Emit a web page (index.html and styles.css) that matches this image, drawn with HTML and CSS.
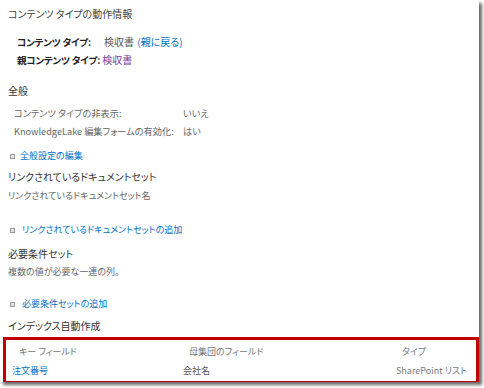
FILE: index.html
```html
<!DOCTYPE html>
<html lang="ja">
<head>
  <meta charset="UTF-8" />
  <title>コンテンツ タイプの動作情報</title>
  <link rel="stylesheet" href="styles.css">
</head>
<body>
<div class="frame">
  <h2 class="title">コンテンツ タイプの動作情報</h2>

  <div class="ct-info">
    <div class="ct-row"><b class="ct-label">コンテンツ タイプ:</b><span class="ct-val">検収書 <a href="#" class="link">(親に戻る)</a></span></div>
    <div class="ct-row"><b>親コンテンツ タイプ:</b> <a href="#" class="visited">検収書</a></div>
  </div>

  <h3 class="section first">全般</h3>
  <div class="props">
    <div class="prop"><span class="prop-label">コンテンツ タイプの非表示:</span><span>いいえ</span></div>
    <div class="prop"><span class="prop-label">KnowledgeLake 編集フォームの有効化:</span><span>はい</span></div>
  </div>
  <div class="action a1"><span class="bullet"></span><a href="#" class="link">全般設定の編集</a></div>

  <h3 class="section s2">リンクされているドキュメントセット</h3>
  <p class="desc">リンクされているドキュメントセット名</p>
  <div class="action a2"><span class="bullet"></span><a href="#" class="link">リンクされているドキュメントセットの追加</a></div>

  <h3 class="section s3">必要条件セット</h3>
  <p class="desc d2">複数の値が必要な一連の列。</p>
  <div class="action a3"><span class="bullet"></span><a href="#" class="link">必要条件セットの追加</a></div>

  <h3 class="section s4">インデックス自動作成</h3>
  <div class="index-box">
    <div class="ix-row ix-head">
      <span>キー フィールド</span>
      <span>母集団のフィールド</span>
      <span>タイプ</span>
    </div>
    <div class="ix-row">
      <a href="#" class="link">注文番号</a>
      <span class="dark">会社名</span>
      <span>SharePoint リスト</span>
    </div>
  </div>
</div>
</body>
</html>
```

FILE: styles.css
```css
* { box-sizing: border-box; }
body {
  margin: 0;
  background: #fff;
  font-family: "Noto Sans CJK JP", "Noto Sans", sans-serif;
  font-feature-settings: "palt";
  color: #444;
  width: 484px;
  height: 388px;
  overflow: hidden;
}
.frame {
  width: 479px;
  height: 382px;
  background: #fff;
  box-shadow: 3px 3px 3px #6b6b6b;
  overflow: hidden;
}
h2, h3, p { margin: 0; font-weight: normal; }
a { text-decoration: none; }
.link { color: #0072c6; }
.visited { color: #7a3c9a; }

.title {
  font-size: 10px;
  line-height: 16px;
  padding: 6px 0 0 8px;
  color: #444;
}
.ct-info {
  margin: 11px 0 0 17px;
  font-size: 9.5px;
  line-height: 17px;
}
.ct-row b { color: #222; font-weight: bold; letter-spacing: -0.2px; }
.ct-label { display: inline-block; width: 87px; }
.ct-val { color: #555; font-size: 10px; }
.ct-val .link { margin-left: 1px; }
.visited { font-size: 10px; }

.section {
  font-size: 10px;
  line-height: 16px;
  padding-left: 8px;
  color: #333;
}
.section.first { margin-top: 14px; }
.s2 { margin-top: 5px; }
.s3 { margin-top: 8px; }
.s4 { margin-top: 6px; }

.props {
  margin: 5px 0 0 14px;
  font-size: 9.2px;
  line-height: 18px;
  color: #666;
}
.prop { display: flex; }
.prop-label { width: 169px; }

.action {
  display: flex;
  align-items: center;
  font-size: 9px;
  line-height: 16px;
  padding-left: 10px;
}
.bullet {
  width: 5px;
  height: 5px;
  border: 1px solid #9a9a9a;
  background: #e4e4e4;
  margin-right: 5px;
}
.a1 { margin-top: 8px; }
.a2 { margin-top: 18px; }
.a2 .bullet { margin-right: 7px; }
.a3 { margin-top: 16px; }
.a3 .bullet { margin-right: 7px; }

.desc {
  margin-top: 3px;
  padding-left: 8px;
  font-size: 9px;
  line-height: 16px;
  color: #666;
}
.desc.d2 { margin-top: 2px; }

.index-box {
  margin: 3px 0 0 3px;
  width: 476px;
  border: 3px solid #c00000;
  padding: 2px 0 1px 0;
  font-size: 9px;
  color: #777;
}
.ix-row {
  display: grid;
  grid-template-columns: 171px 213px 1fr;
  line-height: 19px;
}
.ix-row > * { padding-left: 6px; }
.ix-head > * { padding-left: 12px; }
.ix-head > :first-child { padding-left: 13px; }
.dark { color: #555; }
```
